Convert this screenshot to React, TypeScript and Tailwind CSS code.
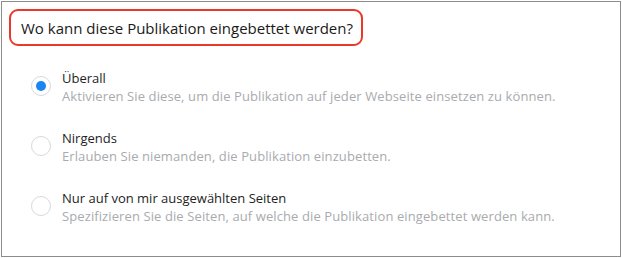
import React from 'react';

const options = [
    { label: 'Überall', hint: 'Aktivieren Sie diese, um die Publikation auf jeder Webseite einsetzen zu können.', checked: true },
    { label: 'Nirgends', hint: 'Erlauben Sie niemanden, die Publikation einzubetten.', checked: false },
    { label: 'Nur auf von mir ausgewählten Seiten', hint: 'Spezifizieren Sie die Seiten, auf welche die Publikation eingebettet werden kann.', checked: false },
];

export default function App() {
    return (
        <div className="w-[622px] h-[258px] bg-white p-px" style={{ fontFamily: '"Open Sans", sans-serif' }}>
            <div className="h-full border border-[#8c8c8c] px-[7px] pt-[7px]">
                {/* Highlighted question */}
                <div className="inline-flex h-[37px] items-center rounded-[9px] border-2 border-[#e8392a] pl-[10px] pr-[8px] pt-[2px]">
                    <h2 className="text-[15px] text-[#1a1a1a]">Wo kann diese Publikation eingebettet werden?</h2>
                </div>

                {/* Radio list */}
                <div className="mt-[23px] flex flex-col gap-[24px] pl-[22px]">
                    {options.map((opt, i) => (
                        <label key={i} className="flex items-start gap-[11px]">
                            <span className="mt-[7px] flex h-[20px] w-[20px] shrink-0 items-center justify-center rounded-full border border-[#d9d9d9] bg-white">
                                {opt.checked && <span className="h-[10px] w-[10px] rounded-full bg-[#1a86f2]" />}
                            </span>
                            <span className="flex flex-col">
                                <span className="text-[13px] leading-[18px] text-[#1e1e1e]">{opt.label}</span>
                                <span className="text-[13px] leading-[18px] tracking-[0.1px] text-[#a9abae]">{opt.hint}</span>
                            </span>
                        </label>
                    ))}
                </div>
            </div>
        </div>
    );
}
